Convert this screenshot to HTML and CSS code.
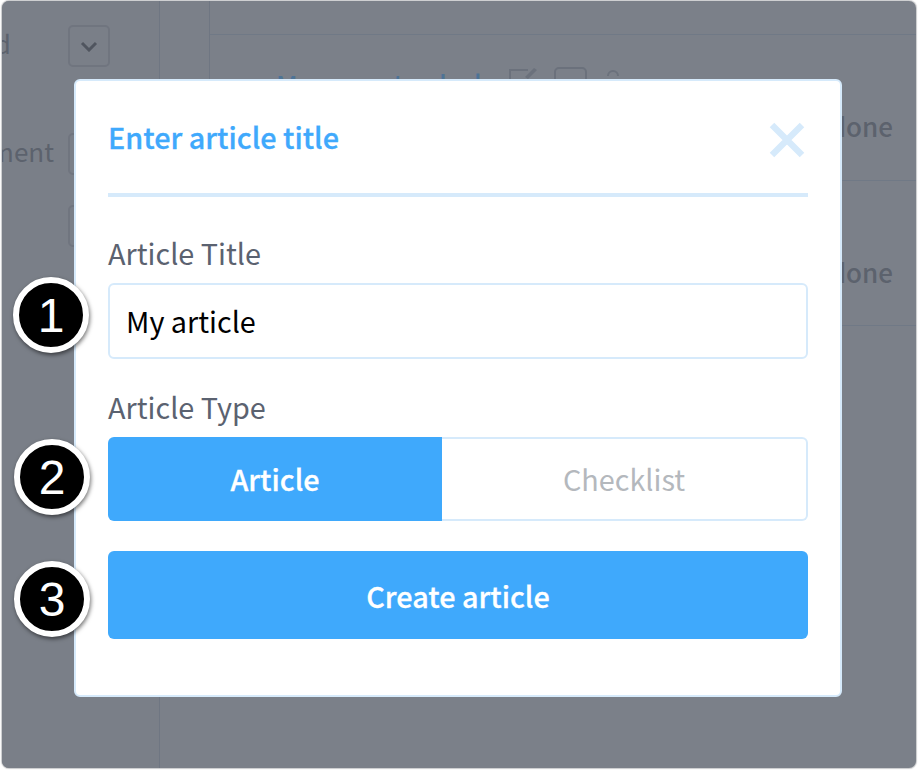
FILE: index.html
```html
<!DOCTYPE html>
<html lang="en">
<head>
<meta charset="utf-8">
<title>Enter article title</title>
<link rel="stylesheet" href="styles.css">
</head>
<body>
<div class="window">
  <div class="backdrop">
    <div class="sidebar">
      <div class="side-row side-row-first">
        <span class="side-label side-label-first">Assigned</span>
        <span class="side-box">
          <svg class="chevron" width="18" height="11" viewBox="0 0 18 11"><path d="M2 2l7 7 7-7" fill="none" stroke="#50555f" stroke-width="3"/></svg>
        </span>
      </div>
      <div class="side-row side-row-second">
        <span class="side-label side-label-second">Department</span>
        <span class="side-box"></span>
      </div>
      <div class="side-row side-row-third">
        <span class="side-box"></span>
      </div>
    </div>
    <div class="gutter"></div>
    <div class="main">
      <div class="main-top"></div>
      <div class="main-row main-row-first">
        <span class="main-title">Manage at a desk</span>
        <span class="main-tools">
          <svg width="30" height="20" viewBox="0 0 30 20"><path d="M2 19V3h18" fill="none" stroke="#6b717c" stroke-width="2"/><path d="M29 3l-3-2-9 9 3 2z" fill="#6b717c"/></svg>
          <span class="tool-box"></span>
          <svg class="tool-person" width="16" height="20" viewBox="0 0 16 20"><path d="M3 9a5 5 0 0 1 10 0" fill="none" stroke="#6b717c" stroke-width="2"/></svg>
        </span>
        <span class="main-done">done</span>
      </div>
      <div class="main-row main-row-second">
        <span class="main-done">done</span>
      </div>
    </div>
  </div>

  <div class="modal">
    <div class="modal-head">
      <h1 class="modal-title">Enter article title</h1>
      <svg class="close" width="36" height="36" viewBox="0 0 36 36"><path d="M3 3l30 30M33 3L3 33" stroke="#d6eafb" stroke-width="6.4" fill="none"/></svg>
    </div>
    <label class="field-label field-label-title">Article Title</label>
    <div class="input">My article</div>
    <label class="field-label field-label-type">Article Type</label>
    <div class="segments">
      <div class="segment segment-on">Article</div>
      <div class="segment segment-off">Checklist</div>
    </div>
    <button class="submit">Create article</button>
  </div>

  <span class="marker marker-1">1</span>
  <span class="marker marker-2">2</span>
  <span class="marker marker-3">3</span>
</div>
</body>
</html>
```

FILE: styles.css
```css
* { box-sizing: border-box; }
html, body { margin: 0; height: 100%; background: #fff; }
body { padding: 1px 2px 2px 2px; font-family: "Noto Sans CJK SC", "Noto Sans", sans-serif; }

.window {
  position: relative;
  width: 914px;
  height: 767px;
  border-radius: 7px;
  overflow: hidden;
  background: #7b8089;
  box-shadow: 0 0 1px 1px #c9cacc;
}

.backdrop { display: flex; height: 100%; color: #5c626d; }
.sidebar { width: 158px; flex: none; border-right: 1px solid #6f7682; background: #7a7f88; }
.side-row { display: flex; justify-content: flex-end; padding-right: 49px; height: 42px; position: relative; }
.side-row-first { margin-top: 24px; }
.side-row-second { margin-top: 66px; }
.side-row-third { margin-top: 30px; }
.side-label { position: absolute; font-size: 26px; line-height: 36px; white-space: nowrap; }
.side-label-first { right: 148px; top: 0; }
.side-label-second { right: 105px; top: 0; }
.side-box { width: 42px; height: 42px; border: 2px solid #70757f; border-radius: 5px; display: flex; align-items: center; justify-content: center; }
.gutter { width: 50px; height: 325px; flex: none; border-right: 1px solid #6f7682; }
.main { flex: 1; }
.main-top { height: 34px; border-bottom: 1px solid #707986; }
.main-row { border-bottom: 1px solid #707986; position: relative; }
.main-row-first { height: 146px; }
.main-row-second { height: 145px; }
.main-title { position: absolute; left: 66px; top: 30px; font-size: 26px; font-weight: 500; color: #4d7396; white-space: nowrap; }
.main-tools { position: absolute; left: 298px; top: 32px; display: flex; gap: 16px; align-items: flex-start; }
.tool-box { width: 33px; height: 24px; border: 2px solid #6b717c; border-radius: 5px; }
.tool-person { margin-left: 2px; }
.main-done { position: absolute; right: 23px; top: 72px; font-size: 26px; font-weight: 500; }

.modal {
  position: absolute;
  left: 72px;
  top: 78px;
  width: 768px;
  height: 618px;
  padding: 0 32px;
  background: #fff;
  border: 2px solid #d6eafb;
  border-radius: 6px;
}
.modal-head {
  display: flex;
  justify-content: space-between;
  align-items: flex-start;
  height: 116px;
  border-bottom: 4px solid #d6eafb;
  position: relative;
}
.modal-title { margin: 34px 0 0 0; font-size: 28.8px; line-height: 44px; font-weight: 500; color: #3fa9fc; -webkit-text-stroke: 0.3px #3fa9fc; }
.close { position: absolute; right: 3px; top: 41px; }

.field-label { display: block; font-size: 28.8px; line-height: 40px; color: #5b6270; }
.field-label-title { margin-top: 36px; }
.field-label-type { margin-top: 28px; }

.input {
  margin-top: 10px;
  height: 76px;
  padding: 0 16px 2px;
  display: flex;
  align-items: center;
  font-size: 28.8px;
  color: #000;
  background: #fff;
  border: 2px solid #d6eafb;
  border-radius: 6px;
}

.segments { display: flex; margin-top: 10px; height: 84px; }
.segment { display: flex; align-items: center; justify-content: center; font-size: 28.8px; padding-bottom: 1px; }
.segment-on { width: 334px; background: #3fa9fc; color: #fff; font-weight: 500; border-radius: 6px 0 0 6px; -webkit-text-stroke: 0.3px #fff; }
.segment-off { flex: 1; color: #b4b8bd; border: 2px solid #d6eafb; border-left: 0; border-radius: 0 6px 6px 0; }

.submit {
  display: block;
  width: 100%;
  height: 88px;
  margin-top: 30px;
  font: 500 28.8px "Noto Sans CJK SC", "Noto Sans", sans-serif;
  color: #fff;
  background: #3fa9fc;
  border: 0;
  border-radius: 6px;
  -webkit-text-stroke: 0.3px #fff;
}

.marker {
  position: absolute;
  width: 76px;
  height: 76px;
  display: flex;
  align-items: center;
  justify-content: center;
  font-family: "Liberation Sans", sans-serif;
  font-size: 48px;
  color: #fff;
  background: #000;
  border: 6px solid #fff;
  border-radius: 50%;
  box-shadow: 1px 2px 4px rgba(0,0,0,.55);
}
.marker-1 { left: 11px; top: 276px; }
.marker-2 { left: 12px; top: 438px; }
.marker-3 { left: 12px; top: 560px; }
```
